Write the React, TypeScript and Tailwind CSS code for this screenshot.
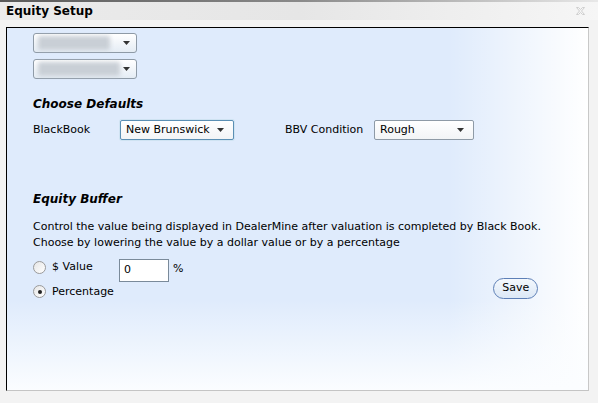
const font = { fontFamily: '"DejaVu Sans", Verdana, sans-serif' };

const Arrow = () => (
  <svg width="7" height="4" viewBox="0 0 7 4" className="shrink-0">
    <path d="M0 0h7L3.5 4z" fill="#333" />
  </svg>
);

const BlurSelect = ({ w }: { w: string }) => (
  <div className="flex h-[20px] w-[104px] items-center rounded-[3px] border border-[#8e9aa6] bg-gradient-to-b from-white to-[#e4ecf4] pl-[4px] pr-[6px]">
    <div className={`h-[14px] ${w} rounded-[2px] bg-[#c9cfd6] blur-[2px]`} />
    <div className="flex-1" />
    <Arrow />
  </div>
);

const Select = ({ value, width, focus }: { value: string; width: string; focus?: boolean }) => (
  <div
    className={`flex h-[20px] ${width} items-center justify-between rounded-[2px] border ${
      focus ? "border-[#5b8fb4] shadow-[0_0_0_1px_#cfe3f2]" : "border-[#8e9aa6]"
    } bg-gradient-to-b from-white to-[#f2f4f6] pl-[5px] pr-[9px] text-[11px] text-black`}
  >
    <span>{value}</span>
    <Arrow />
  </div>
);

const Radio = ({ checked }: { checked?: boolean }) => (
  <div className="flex h-[13px] w-[13px] items-center justify-center rounded-full border border-[#9a9a9a] bg-gradient-to-br from-[#e6e6e6] to-white">
    {checked && <div className="h-[4px] w-[4px] rounded-full bg-[#222]" />}
  </div>
);

export default function App() {
  return (
    <div className="h-[403px] w-[598px] overflow-hidden bg-[#f3f3f3]" style={font}>
      <div className="h-[2px] bg-gradient-to-r from-[#5a5a5a] via-[#8a8a8a] to-[#e8e8e8]" />
      <div className="flex h-[18px] items-center justify-between bg-gradient-to-r from-[#ebebeb] via-[#e6e6e6] to-[#f6f6f6] pl-[6px] pr-[13px]">
        <span className="text-[12px] font-bold text-black">Equity Setup</span>
        <svg width="9" height="8" viewBox="0 0 9 8">
          <path d="M0.5 0.5h2l2 2 2-2h2l-3 3.5 3 3.5h-2l-2-2-2 2h-2l3-3.5z" fill="none" stroke="#cfcfcf" strokeWidth="1" />
        </svg>
      </div>
      <div className="h-[7px]" />
      <div className="relative ml-[6px] h-[364px] w-[583px] overflow-hidden border-l border-t border-l-black border-t-black border-r border-b border-r-[#c8c8c8] border-b-[#c4c4c4] bg-[#dfebfc]">
        <div className="absolute inset-y-0 right-0 w-[140px] bg-gradient-to-r from-transparent to-white" />
        <div className="absolute inset-x-0 bottom-0 h-[90px] bg-gradient-to-b from-transparent to-[#fbfdff]" />
        <div className="relative flex flex-col pl-[26px] pt-[5px] text-[11px] text-black">
          <div className="flex flex-col gap-[6px]">
            <BlurSelect w="w-[72px]" />
            <BlurSelect w="w-[82px]" />
          </div>
          <div className="mt-[16px] text-[12px] font-bold italic">Choose Defaults</div>
          <div className="mt-[7px] flex items-center">
            <span className="w-[87px]">BlackBook</span>
            <Select value="New Brunswick" width="w-[114px]" focus />
            <span className="ml-[51px] w-[89px]">BBV Condition</span>
            <Select value="Rough" width="w-[100px]" />
          </div>
          <div className="mt-[50px] text-[12px] font-bold italic">Equity Buffer</div>
          <div className="mt-[11px] leading-[16px]">
            Control the value being displayed in DealerMine after valuation is completed by Black Book.
            <br />
            Choose by lowering the value by a dollar value or by a percentage
          </div>
          <div className="mt-[5px] flex items-start">
            <div className="flex flex-col gap-[8px]">
              <div className="flex items-center gap-[6px] pt-[3px]">
                <Radio />
                <span>$ Value</span>
              </div>
              <div className="flex items-center gap-[6px]">
                <Radio checked />
                <span>Percentage</span>
              </div>
            </div>
            <div className="ml-[5px] mt-[3px] flex h-[23px] w-[50px] items-center border border-[#7a8a9a] bg-white pl-[4px]">0</div>
            <span className="ml-[4px] mt-[5px]">%</span>
            <div className="ml-[310px] mt-[22px] flex h-[21px] w-[45px] items-center justify-center rounded-full border-[1.5px] border-[#5d7fb6] bg-gradient-to-b from-[#f4f8fd] to-[#dce8f6] text-[11px]">
              Save
            </div>
          </div>
        </div>
      </div>
    </div>
  );
}
